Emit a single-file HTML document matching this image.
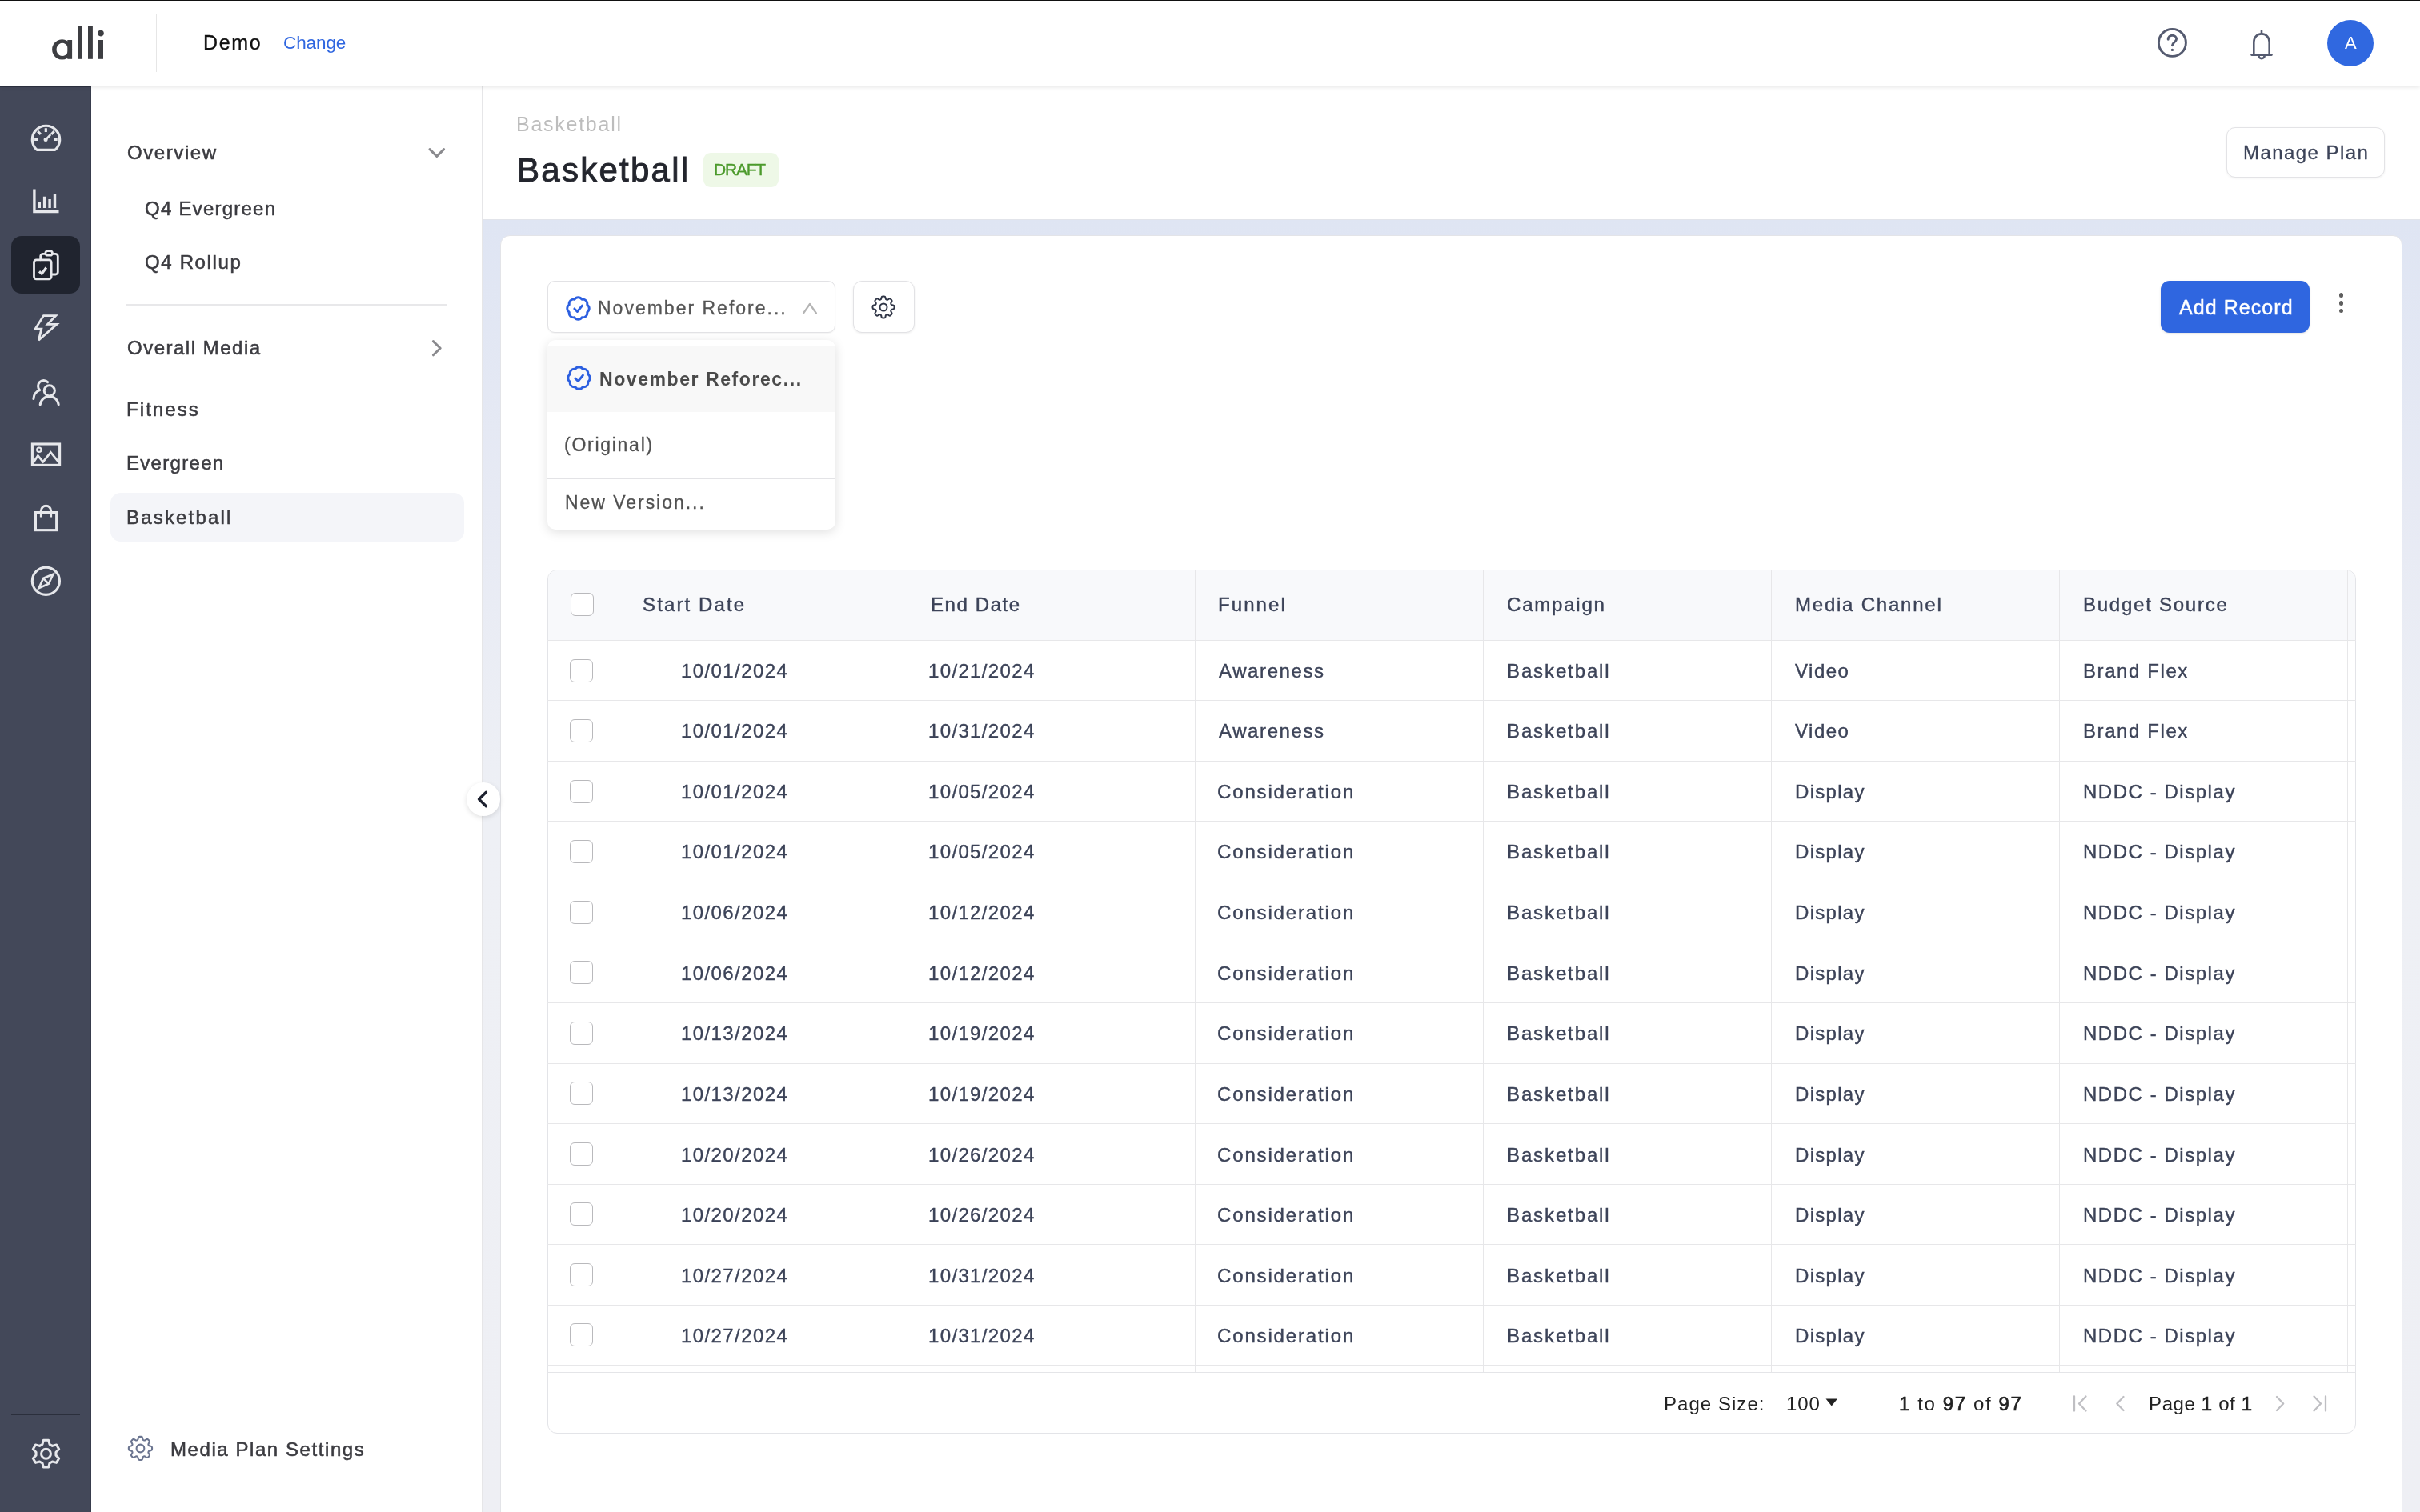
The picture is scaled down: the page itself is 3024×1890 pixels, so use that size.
<!DOCTYPE html>
<html><head><meta charset="utf-8"><title>Basketball - Media Plan</title><style>
*{margin:0;padding:0;box-sizing:border-box}
html,body{width:3024px;height:1890px;overflow:hidden;background:#fff;font-family:"Liberation Sans", sans-serif}
.a{position:absolute}
.t{position:absolute;line-height:1;white-space:nowrap;will-change:transform}
svg{position:absolute;overflow:visible}

b{font-weight:400;-webkit-text-stroke:0.65px #222}
</style></head><body>
<div class="a" style="left:602px;top:274px;width:2422px;height:1616px;background:linear-gradient(to bottom,#dfe5f3 0px,#e7eaf4 350px,#eef0f5 750px,#eeeff4 1616px)"></div><div class="a" style="left:602px;top:274px;width:2422px;height:1px;background:#e2e4ea"></div><div class="a" style="left:624.8px;top:293.5px;width:2377.2px;height:1700px;background:#fff;border-radius:12px;border:1px solid #e3e4e8"></div><div class="a" style="left:0;top:0;width:3024px;height:108px;background:#fff;box-shadow:0 1px 5px rgba(0,0,0,0.10);z-index:5"></div><div class="a" style="left:0;top:0;width:3024px;height:1px;background:#111;z-index:6"></div><svg style="left:0;top:0;z-index:6" width="200" height="108" viewBox="0 0 200 108">
<g fill="#3d3e42">
<path fill-rule="evenodd" d="M77.6 49.2a12.5 12.7 0 1 0 0.01 0Z M77.9 53.8a7.3 8.1 0 1 1 -0.01 0Z"/>
<rect x="84.3" y="50" width="5.8" height="23.8"/>
<rect x="97" y="32.3" width="6" height="41.5"/>
<rect x="110" y="32.3" width="5.9" height="41.5"/>
<rect x="122.9" y="50" width="6.1" height="23.8"/>
<circle cx="126" cy="41.6" r="3.8"/>
</g></svg><div class="a" style="left:195px;top:18px;width:1px;height:72px;background:#e6e6e6;z-index:6"></div><div style="position:absolute;z-index:6;left:0;top:0"><div class="t" style="left:253.88px;top:40.84px;font-size:25px;color:#111;font-weight:400;letter-spacing:1.64px;-webkit-text-stroke:0.35px #111;">Demo</div><div class="t" style="left:353.88px;top:42.95px;font-size:22.5px;color:#2f66e0;font-weight:400;letter-spacing:-0.09599999999999997px;">Change</div></div><svg style="left:2690px;top:30px;z-index:6" width="50" height="50" viewBox="0 0 50 50">
<g fill="none" stroke="#555b70" stroke-width="2.9" stroke-linecap="round">
<circle cx="24.4" cy="23.4" r="17"/>
<path d="M19.2 19.3c0-3.2 2.3-5 5.2-5 2.9 0 5.2 1.8 5.2 4.5 0 3.9-5.2 4.1-5.2 8"/>
</g><circle cx="24.4" cy="32.4" r="1.7" fill="#555b70"/></svg><svg style="left:2800px;top:30px;z-index:6" width="50" height="50" viewBox="0 0 50 50">
<g fill="none" stroke="#555b70" stroke-width="2.6" stroke-linejoin="round" stroke-linecap="round">
<path d="M16.3 38.5V22.6c0-6 4.3-10.2 9.7-10.2s9.7 4.2 9.7 10.2v15.9"/>
<path d="M13.5 38.6h25"/>
<path d="M22.3 39.4a3.7 3.7 0 0 0 7.4 0"/>
<path d="M26 8.5v3"/>
</g></svg><div class="a" style="left:2908.3px;top:25px;width:58px;height:58px;border-radius:50%;background:#3068e0;z-index:6"></div><div style="position:absolute;z-index:7;left:0;top:0"><div class="t" style="left:2929.9px;top:43.38px;font-size:22px;color:#fff;font-weight:400;letter-spacing:0px;">A</div></div><div class="a" style="left:0;top:108px;width:114px;height:1782px;background:#434859;border-right:1px solid #383d4d;border-top:1px solid #2e3242;z-index:4"></div><div class="a" style="left:14px;top:295px;width:86px;height:71.5px;background:#20242f;border-radius:13px;z-index:4"></div><div class="a" style="left:14px;top:1766.5px;width:86px;height:2px;background:#2b2f3c;z-index:4"></div><svg style="left:0;top:0;z-index:5" width="114" height="1890" viewBox="0 0 114 1890">
<g fill="none" stroke="#e6e7eb" stroke-width="3" stroke-linecap="butt" stroke-linejoin="round">
<!-- gauge -->
<path d="M46.2 187.4 A17.2 17.2 0 1 1 68.8 187.4 Z" stroke-width="3.2"/>
<path d="M57.3 160.3v4.7 M47.2 164.2l3.6 3.6 M67.8 164.2l-3.6 3.6 M43.1 174.5h4.4 M67.3 174.5h4.4" stroke-width="3.2"/>
<path d="M57.1 174.6 L62.6 169" stroke-width="2.6" stroke-linecap="round"/>
</g>
<circle cx="57.1" cy="174.6" r="2.5" fill="#e6e7eb"/>
<g fill="none" stroke="#e6e7eb" stroke-width="3.4" stroke-linecap="butt" stroke-linejoin="miter">
<!-- bar chart -->
<path d="M42.9 236.6V264.6H73.5"/>
<path d="M49.3 259.9v-6.8 M55.6 259.9v-14.2 M62.1 259.9v-10.9 M68.5 259.9v-17.9" stroke-width="3.4" stroke-linecap="butt"/>
</g>
<g fill="none" stroke="#e6e7eb" stroke-width="2.8" stroke-linecap="round" stroke-linejoin="round">
<!-- clipboard -->
<path d="M50.7 324.8V320.3a3 3 0 0 1 3-3H69.3a3 3 0 0 1 3 3V340a3 3 0 0 1-3 3H64.1"/>
<rect x="56.8" y="313.7" width="8.7" height="5.5" rx="2.75" fill="#20242f"/>
<rect x="42.5" y="324.8" width="21.6" height="24" rx="3"/>
<path d="M49 339.3l3.2 2.8 5.6-7.6" stroke-width="3.2" stroke-linecap="butt" stroke-linejoin="miter"/>
<!-- lightning -->
<path d="M54.5 394.6H69.7L59.5 405.3H71L48.3 425.3L51.8 411.1H44.1Z" stroke-linejoin="miter" stroke-miterlimit="3" stroke-linecap="butt"/>
<!-- people -->
<path d="M59.6 477.6A6.4 6.4 0 1 0 49.6 487.6 M49.6 487.6A12.2 12.2 0 0 0 41.9 498.6" stroke-width="3"/>
<circle cx="61.8" cy="488.3" r="6.6" stroke-width="3"/>
<path d="M50.2 505.7A11.6 11.6 0 0 1 73.2 505.7" stroke-width="3"/>
<!-- image -->
<rect x="40.4" y="555" width="34.2" height="26.4" stroke-width="3.1" stroke-linejoin="miter"/>
<circle cx="48.9" cy="562.2" r="2.7" stroke-width="2.2"/>
<path d="M41.8 578.1L47.4 569.6L53.8 577.4L63.4 565.3L73.7 578.1" stroke-width="2.7" stroke-linejoin="miter" stroke-linecap="butt"/>
<!-- bag -->
<rect x="44.45" y="640.55" width="26.2" height="22.1" stroke-width="3.1" stroke-linejoin="miter"/>
<path d="M51.4 646.5V638.3A6.1 6.1 0 0 1 63.6 638.3V646.5" stroke-width="3" stroke-linecap="butt"/>
<!-- compass -->
<circle cx="57.4" cy="726.3" r="17.1" stroke-width="3.1"/>
<path d="M66.4 717.7L60.8 729.8L48.5 735.1L54.2 722.8Z M54.5 723.3L60.5 729.3" stroke-width="2.6" stroke-linejoin="miter"/>
</g>
<g fill="none" stroke="#e6e7eb" stroke-width="3">
<path d="M52.98 1805.44 L54.37 1800.29 L60.63 1800.29 L62.02 1805.44 L65.43 1807.41 L70.58 1806.03 L73.71 1811.46 L69.94 1815.23 L69.94 1819.17 L73.71 1822.94 L70.58 1828.37 L65.43 1826.99 L62.02 1828.96 L60.63 1834.11 L54.37 1834.11 L52.98 1828.96 L49.57 1826.99 L44.42 1828.37 L41.29 1822.94 L45.06 1819.17 L45.06 1815.23 L41.29 1811.46 L44.42 1806.03 L49.57 1807.41Z" stroke-linejoin="round"/>
<circle cx="57.5" cy="1817.2" r="6"/>
</g>
</svg><div class="a" style="left:114px;top:108px;width:489px;height:1782px;background:#fff;border-right:1px solid #e6e6e8;z-index:3"></div><div class="a" style="left:137.5px;top:616.4px;width:442.5px;height:60.4px;background:#f4f5f9;border-radius:13px;z-index:3"></div><div style="position:absolute;z-index:4;left:0;top:0"><div class="t" style="left:159.36px;top:179.18px;font-size:24px;color:#3b3b40;font-weight:400;letter-spacing:1.5739999999999998px;-webkit-text-stroke:0.55px #3b3b40;">Overview</div><div class="t" style="left:181.0px;top:249.08px;font-size:24px;color:#3b3b40;font-weight:400;letter-spacing:1.24px;-webkit-text-stroke:0.55px #3b3b40;">Q4 Evergreen</div><div class="t" style="left:181.0px;top:316.28px;font-size:24px;color:#3b3b40;font-weight:400;letter-spacing:1.6509999999999998px;-webkit-text-stroke:0.55px #3b3b40;">Q4 Rollup</div><div class="t" style="left:159.0px;top:422.68px;font-size:24px;color:#3b3b40;font-weight:400;letter-spacing:1.5px;-webkit-text-stroke:0.55px #3b3b40;">Overall Media</div><div class="t" style="left:158.46px;top:500.08px;font-size:24px;color:#3b3b40;font-weight:400;letter-spacing:2.07px;-webkit-text-stroke:0.55px #3b3b40;">Fitness</div><div class="t" style="left:158.46px;top:567.28px;font-size:24px;color:#3b3b40;font-weight:400;letter-spacing:1.307px;-webkit-text-stroke:0.55px #3b3b40;">Evergreen</div><div class="t" style="left:158.46px;top:635.08px;font-size:24px;color:#3b3b40;font-weight:400;letter-spacing:2.18px;-webkit-text-stroke:0.55px #3b3b40;">Basketball</div><div class="t" style="left:213.1px;top:1799.88px;font-size:24px;color:#3b3b40;font-weight:400;letter-spacing:1.57px;-webkit-text-stroke:0.55px #3b3b40;">Media Plan Settings</div></div><div class="a" style="left:158px;top:380px;width:401px;height:1.5px;background:#e8e8ea;z-index:4"></div><div class="a" style="left:130px;top:1751.7px;width:458px;height:1.5px;background:#e8e8ea;z-index:4"></div><svg style="left:0;top:0;z-index:4" width="600" height="1890" viewBox="0 0 600 1890">
<g fill="none" stroke="#8a8a8e" stroke-width="3" stroke-linecap="round" stroke-linejoin="round">
<path d="M537 186.6l8.8 8.8 8.8-8.8"/>
<path d="M541.4 426.6l8.8 8.6-8.8 8.6"/>
</g>
</svg><svg style="left:156.43px;top:1791.33px;z-index:4" width="38.93" height="38.93" viewBox="0 0 24 24"><g fill="none" stroke="#6b7590" stroke-width="1.295" stroke-linecap="round" stroke-linejoin="round"><path d="M10.343 3.94c.09-.542.56-.94 1.11-.94h1.093c.55 0 1.02.398 1.11.94l.149.894c.07.424.384.764.78.93.398.164.855.142 1.205-.108l.737-.527a1.125 1.125 0 0 1 1.45.12l.773.774c.39.389.44 1.002.12 1.45l-.527.737c-.25.35-.272.806-.107 1.204.165.397.505.71.93.78l.893.15c.543.09.94.559.94 1.109v1.094c0 .55-.397 1.02-.94 1.11l-.894.149c-.424.07-.764.383-.929.78-.165.398-.143.854.107 1.204l.527.738c.32.447.269 1.06-.12 1.45l-.774.773a1.125 1.125 0 0 1-1.449.12l-.738-.527c-.35-.25-.806-.272-1.203-.107-.398.165-.71.505-.781.929l-.149.894c-.09.542-.56.94-1.11.94h-1.094c-.55 0-1.019-.398-1.11-.94l-.148-.894c-.071-.424-.384-.764-.781-.93-.398-.164-.854-.142-1.204.108l-.738.527c-.447.32-1.06.269-1.45-.12l-.773-.774a1.125 1.125 0 0 1-.12-1.45l.527-.737c.25-.35.272-.806.108-1.204-.165-.397-.506-.71-.93-.78l-.894-.15c-.542-.09-.94-.56-.94-1.109v-1.094c0-.55.398-1.02.94-1.11l.894-.149c.424-.07.765-.383.93-.78.165-.398.143-.854-.108-1.204l-.526-.738a1.125 1.125 0 0 1 .12-1.45l.773-.773a1.125 1.125 0 0 1 1.45-.12l.737.527c.35.25.807.272 1.204.107.397-.165.71-.505.78-.929l.15-.894Z"/><circle cx="12" cy="12" r="3"/></g></svg><div class="a" style="left:582.6px;top:978px;width:42px;height:42px;border-radius:50%;background:#fff;box-shadow:0 2px 6px rgba(0,0,0,0.12);z-index:8"></div><svg style="left:590px;top:985px;z-index:9" width="28" height="28" viewBox="0 0 28 28"><path d="M17.4 5.3L8.5 14l8.9 8.7" fill="none" stroke="#1e2230" stroke-width="3.4" stroke-linecap="round" stroke-linejoin="round"/></svg><div class="a" style="left:603px;top:108px;width:2421px;height:166px;background:#fff;z-index:2"></div><div class="a" style="left:879px;top:191px;width:94px;height:43px;background:#eef8e7;border-radius:9px;z-index:2"></div><div class="a" style="left:2782px;top:159px;width:197.5px;height:62.5px;border:1.5px solid #e3e3e6;border-radius:11px;background:#fff;box-shadow:0 1px 3px rgba(0,0,0,0.06);z-index:2"></div><div style="position:absolute;z-index:3;left:0;top:0"><div class="t" style="left:644.74px;top:142.84px;font-size:25px;color:#bdbdbd;font-weight:400;letter-spacing:1.74px;">Basketball</div><div class="t" style="left:645.76px;top:191.85px;font-size:42px;color:#23252d;font-weight:400;letter-spacing:2.26px;-webkit-text-stroke:0.9px #23252d;">Basketball</div><div class="t" style="left:892.32px;top:201.02px;font-size:21px;color:#4c9a2c;font-weight:400;letter-spacing:-1.224px;-webkit-text-stroke:0.35px #4c9a2c;">DRAFT</div><div class="t" style="left:2803.28px;top:178.68px;font-size:24px;color:#3c4358;font-weight:400;letter-spacing:1.438px;-webkit-text-stroke:0.3px #3c4358;">Manage Plan</div></div><div class="a" style="left:683.5px;top:351px;width:360px;height:64.6px;border:1.5px solid #e2e2e5;border-radius:9px;background:#fff;box-shadow:0 1px 2px rgba(0,0,0,0.05);z-index:10"></div><svg style="left:705.5px;top:368.5px;z-index:12" width="33" height="33" viewBox="0 0 24 24">
<g fill="none" stroke="#2c5fe0" stroke-width="2.109" stroke-linecap="round" stroke-linejoin="round">
<path d="M3.85 8.62a4 4 0 0 1 4.78-4.77 4 4 0 0 1 6.74 0 4 4 0 0 1 4.78 4.78 4 4 0 0 1 0 6.74 4 4 0 0 1-4.77 4.78 4 4 0 0 1-6.75 0 4 4 0 0 1-4.78-4.77 4 4 0 0 1 0-6.76Z"/>
<path d="m8.6 12.3 2.6 2.6 4.4-5.4"/></g></svg><div style="position:absolute;z-index:11;left:0;top:0"><div class="t" style="left:747.42px;top:374.03px;font-size:23px;color:#555;font-weight:400;letter-spacing:2.0px;-webkit-text-stroke:0.3px #555;">November Refore...</div></div><svg style="left:1000px;top:375.3px;z-index:11" width="24" height="22" viewBox="0 0 24 22"><path d="M4.1 16.4l7.9-11.4 7.9 11.4" fill="none" stroke="#b4b4b4" stroke-width="2.3" stroke-linecap="round" stroke-linejoin="round"/></svg><div class="a" style="left:1066px;top:351px;width:77px;height:64.6px;border:1.5px solid #e2e2e5;border-radius:11px;background:#fff;box-shadow:0 1px 3px rgba(0,0,0,0.07);z-index:10"></div><svg style="left:1085.80px;top:365.80px;z-index:11" width="36.00" height="36.00" viewBox="0 0 24 24"><g fill="none" stroke="#2f3546" stroke-width="1.333" stroke-linecap="round" stroke-linejoin="round"><path d="M10.343 3.94c.09-.542.56-.94 1.11-.94h1.093c.55 0 1.02.398 1.11.94l.149.894c.07.424.384.764.78.93.398.164.855.142 1.205-.108l.737-.527a1.125 1.125 0 0 1 1.45.12l.773.774c.39.389.44 1.002.12 1.45l-.527.737c-.25.35-.272.806-.107 1.204.165.397.505.71.93.78l.893.15c.543.09.94.559.94 1.109v1.094c0 .55-.397 1.02-.94 1.11l-.894.149c-.424.07-.764.383-.929.78-.165.398-.143.854.107 1.204l.527.738c.32.447.269 1.06-.12 1.45l-.774.773a1.125 1.125 0 0 1-1.449.12l-.738-.527c-.35-.25-.806-.272-1.203-.107-.398.165-.71.505-.781.929l-.149.894c-.09.542-.56.94-1.11.94h-1.094c-.55 0-1.019-.398-1.11-.94l-.148-.894c-.071-.424-.384-.764-.781-.93-.398-.164-.854-.142-1.204.108l-.738.527c-.447.32-1.06.269-1.45-.12l-.773-.774a1.125 1.125 0 0 1-.12-1.45l.527-.737c.25-.35.272-.806.108-1.204-.165-.397-.506-.71-.93-.78l-.894-.15c-.542-.09-.94-.56-.94-1.109v-1.094c0-.55.398-1.02.94-1.11l.894-.149c.424-.07.765-.383.93-.78.165-.398.143-.854-.108-1.204l-.526-.738a1.125 1.125 0 0 1 .12-1.45l.773-.773a1.125 1.125 0 0 1 1.45-.12l.737.527c.35.25.807.272 1.204.107.397-.165.71-.505.78-.929l.15-.894Z"/><circle cx="12" cy="12" r="3"/></g></svg><div class="a" style="left:2700px;top:351px;width:186px;height:65px;background:#2f66e0;border-radius:11px;box-shadow:0 1px 3px rgba(0,0,0,0.12);z-index:10"></div><div style="position:absolute;z-index:11;left:0;top:0"><div class="t" style="left:2722.82px;top:371.84px;font-size:25px;color:#fff;font-weight:400;letter-spacing:1.06px;-webkit-text-stroke:0.45px #fff;">Add Record</div></div><div class="a" style="left:2922.7px;top:365.90000000000003px;width:5.8px;height:5.8px;border-radius:50%;background:#5f5f5f;z-index:10"></div><div class="a" style="left:2922.7px;top:375.8px;width:5.8px;height:5.8px;border-radius:50%;background:#5f5f5f;z-index:10"></div><div class="a" style="left:2922.7px;top:385.70000000000005px;width:5.8px;height:5.8px;border-radius:50%;background:#5f5f5f;z-index:10"></div><div class="a" style="left:684px;top:425px;width:360px;height:237px;background:#fff;border-radius:10px;box-shadow:0 3px 14px rgba(0,0,0,0.13);z-index:20;overflow:hidden"><div class="a" style="left:0;top:6.7px;width:360px;height:83px;background:#f8f8f8"></div><div class="a" style="left:0;top:172.5px;width:360px;height:1.5px;background:#e3e3e6"></div></div><svg style="left:707.3px;top:456.4px;z-index:22" width="33" height="33" viewBox="0 0 24 24">
<g fill="none" stroke="#2c5fe0" stroke-width="2.109" stroke-linecap="round" stroke-linejoin="round">
<path d="M3.85 8.62a4 4 0 0 1 4.78-4.77 4 4 0 0 1 6.74 0 4 4 0 0 1 4.78 4.78 4 4 0 0 1 0 6.74 4 4 0 0 1-4.77 4.78 4 4 0 0 1-6.75 0 4 4 0 0 1-4.78-4.77 4 4 0 0 1 0-6.76Z"/>
<path d="m8.6 12.3 2.6 2.6 4.4-5.4"/></g></svg><div style="position:absolute;z-index:22;left:0;top:0"><div class="t" style="left:749.0px;top:462.53px;font-size:23px;color:#4a4a4a;font-weight:700;letter-spacing:1.575px;-webkit-text-stroke:0.1px #4a4a4a;">November Reforec...</div><div class="t" style="left:705.46px;top:545.03px;font-size:23px;color:#505050;font-weight:400;letter-spacing:1.73px;-webkit-text-stroke:0.3px #505050;">(Original)</div><div class="t" style="left:705.64px;top:617.03px;font-size:23px;color:#505050;font-weight:400;letter-spacing:1.961px;-webkit-text-stroke:0.3px #505050;">New Version...</div></div><div class="a" style="left:683.5px;top:712px;width:2260.0px;height:1079.5px;border:1.5px solid #e3e4e8;border-radius:12px;background:#fff;overflow:hidden;z-index:5"><div class="a" style="left:0;top:0;width:100%;height:88.29999999999995px;background:#f8f9fb"></div></div><div style="position:absolute;z-index:6;left:0;top:0"><div class="a" style="left:683.5px;top:799.6px;width:2260.0px;height:1.5px;background:#e7e7e9"></div><div class="a" style="left:683.5px;top:875px;width:2260.0px;height:1px;background:#e7e7e9"></div><div class="a" style="left:683.5px;top:951px;width:2260.0px;height:1px;background:#e7e7e9"></div><div class="a" style="left:683.5px;top:1026px;width:2260.0px;height:1px;background:#e7e7e9"></div><div class="a" style="left:683.5px;top:1102px;width:2260.0px;height:1px;background:#e7e7e9"></div><div class="a" style="left:683.5px;top:1177px;width:2260.0px;height:1px;background:#e7e7e9"></div><div class="a" style="left:683.5px;top:1253px;width:2260.0px;height:1px;background:#e7e7e9"></div><div class="a" style="left:683.5px;top:1329px;width:2260.0px;height:1px;background:#e7e7e9"></div><div class="a" style="left:683.5px;top:1404px;width:2260.0px;height:1px;background:#e7e7e9"></div><div class="a" style="left:683.5px;top:1480px;width:2260.0px;height:1px;background:#e7e7e9"></div><div class="a" style="left:683.5px;top:1555px;width:2260.0px;height:1px;background:#e7e7e9"></div><div class="a" style="left:683.5px;top:1631px;width:2260.0px;height:1px;background:#e7e7e9"></div><div class="a" style="left:683.5px;top:1706px;width:2260.0px;height:1px;background:#e7e7e9"></div><div class="a" style="left:683.5px;top:1714.6px;width:2260.0px;height:1px;background:#e4e5e8"></div><div class="a" style="left:773.10px;top:713px;width:1px;height:1002px;background:#e7e7e9"></div><div class="a" style="left:1133.10px;top:713px;width:1px;height:1002px;background:#e7e7e9"></div><div class="a" style="left:1493.10px;top:713px;width:1px;height:1002px;background:#e7e7e9"></div><div class="a" style="left:1853.10px;top:713px;width:1px;height:1002px;background:#e7e7e9"></div><div class="a" style="left:2213.10px;top:713px;width:1px;height:1002px;background:#e7e7e9"></div><div class="a" style="left:2573.10px;top:713px;width:1px;height:1002px;background:#e7e7e9"></div><div class="a" style="left:2932.80px;top:713px;width:1px;height:1002px;background:#e7e7e9"></div><div class="a" style="left:712.8px;top:740.8px;width:29px;height:29px;border:1.5px solid #b9b9bc;border-radius:6px;background:#fff"></div><div class="a" style="left:712px;top:823.5649999999999px;width:29px;height:29px;border:1.5px solid #b9b9bc;border-radius:6px;background:#fff"></div><div class="a" style="left:712px;top:899.0949999999999px;width:29px;height:29px;border:1.5px solid #b9b9bc;border-radius:6px;background:#fff"></div><div class="a" style="left:712px;top:974.6249999999999px;width:29px;height:29px;border:1.5px solid #b9b9bc;border-radius:6px;background:#fff"></div><div class="a" style="left:712px;top:1050.155px;width:29px;height:29px;border:1.5px solid #b9b9bc;border-radius:6px;background:#fff"></div><div class="a" style="left:712px;top:1125.6850000000002px;width:29px;height:29px;border:1.5px solid #b9b9bc;border-radius:6px;background:#fff"></div><div class="a" style="left:712px;top:1201.215px;width:29px;height:29px;border:1.5px solid #b9b9bc;border-radius:6px;background:#fff"></div><div class="a" style="left:712px;top:1276.7450000000001px;width:29px;height:29px;border:1.5px solid #b9b9bc;border-radius:6px;background:#fff"></div><div class="a" style="left:712px;top:1352.275px;width:29px;height:29px;border:1.5px solid #b9b9bc;border-radius:6px;background:#fff"></div><div class="a" style="left:712px;top:1427.805px;width:29px;height:29px;border:1.5px solid #b9b9bc;border-radius:6px;background:#fff"></div><div class="a" style="left:712px;top:1503.335px;width:29px;height:29px;border:1.5px solid #b9b9bc;border-radius:6px;background:#fff"></div><div class="a" style="left:712px;top:1578.865px;width:29px;height:29px;border:1.5px solid #b9b9bc;border-radius:6px;background:#fff"></div><div class="a" style="left:712px;top:1654.3950000000002px;width:29px;height:29px;border:1.5px solid #b9b9bc;border-radius:6px;background:#fff"></div><div class="t" style="left:802.9200000000001px;top:743.58px;font-size:24px;color:#3c4358;font-weight:400;letter-spacing:2.12px;-webkit-text-stroke:0.45px #3c4358;">Start Date</div><div class="t" style="left:1163.36px;top:743.58px;font-size:24px;color:#3c4358;font-weight:400;letter-spacing:1.592px;-webkit-text-stroke:0.45px #3c4358;">End Date</div><div class="t" style="left:1522.4199999999998px;top:743.58px;font-size:24px;color:#3c4358;font-weight:400;letter-spacing:2.076px;-webkit-text-stroke:0.45px #3c4358;">Funnel</div><div class="t" style="left:1882.74px;top:743.58px;font-size:24px;color:#3c4358;font-weight:400;letter-spacing:1.7930000000000001px;-webkit-text-stroke:0.45px #3c4358;">Campaign</div><div class="t" style="left:2242.8px;top:743.58px;font-size:24px;color:#3c4358;font-weight:400;letter-spacing:1.774px;-webkit-text-stroke:0.45px #3c4358;">Media Channel</div><div class="t" style="left:2603.3199999999997px;top:743.58px;font-size:24px;color:#3c4358;font-weight:400;letter-spacing:1.748px;-webkit-text-stroke:0.45px #3c4358;">Budget Source</div><div class="t" style="left:851.36px;top:826.55px;font-size:24px;color:#3c4358;font-weight:400;letter-spacing:1.4100000000000001px;-webkit-text-stroke:0.4px #3c4358;">10/01/2024</div><div class="t" style="left:1160.46px;top:826.55px;font-size:24px;color:#3c4358;font-weight:400;letter-spacing:1.35px;-webkit-text-stroke:0.4px #3c4358;">10/21/2024</div><div class="t" style="left:1523.12px;top:826.55px;font-size:24px;color:#3c4358;font-weight:400;letter-spacing:1.596px;-webkit-text-stroke:0.4px #3c4358;">Awareness</div><div class="t" style="left:1882.86px;top:826.55px;font-size:24px;color:#3c4358;font-weight:400;letter-spacing:1.88px;-webkit-text-stroke:0.4px #3c4358;">Basketball</div><div class="t" style="left:2242.9px;top:826.55px;font-size:24px;color:#3c4358;font-weight:400;letter-spacing:1.505px;-webkit-text-stroke:0.4px #3c4358;">Video</div><div class="t" style="left:2602.52px;top:826.55px;font-size:24px;color:#3c4358;font-weight:400;letter-spacing:1.5899999999999999px;-webkit-text-stroke:0.4px #3c4358;">Brand Flex</div><div class="t" style="left:851.36px;top:902.18px;font-size:24px;color:#3c4358;font-weight:400;letter-spacing:1.4100000000000001px;-webkit-text-stroke:0.4px #3c4358;">10/01/2024</div><div class="t" style="left:1160.46px;top:902.18px;font-size:24px;color:#3c4358;font-weight:400;letter-spacing:1.35px;-webkit-text-stroke:0.4px #3c4358;">10/31/2024</div><div class="t" style="left:1523.12px;top:902.18px;font-size:24px;color:#3c4358;font-weight:400;letter-spacing:1.596px;-webkit-text-stroke:0.4px #3c4358;">Awareness</div><div class="t" style="left:1882.86px;top:902.18px;font-size:24px;color:#3c4358;font-weight:400;letter-spacing:1.88px;-webkit-text-stroke:0.4px #3c4358;">Basketball</div><div class="t" style="left:2242.9px;top:902.18px;font-size:24px;color:#3c4358;font-weight:400;letter-spacing:1.505px;-webkit-text-stroke:0.4px #3c4358;">Video</div><div class="t" style="left:2602.52px;top:902.18px;font-size:24px;color:#3c4358;font-weight:400;letter-spacing:1.5899999999999999px;-webkit-text-stroke:0.4px #3c4358;">Brand Flex</div><div class="t" style="left:851.36px;top:977.81px;font-size:24px;color:#3c4358;font-weight:400;letter-spacing:1.4100000000000001px;-webkit-text-stroke:0.4px #3c4358;">10/01/2024</div><div class="t" style="left:1160.46px;top:977.81px;font-size:24px;color:#3c4358;font-weight:400;letter-spacing:1.35px;-webkit-text-stroke:0.4px #3c4358;">10/05/2024</div><div class="t" style="left:1521.32px;top:977.81px;font-size:24px;color:#3c4358;font-weight:400;letter-spacing:1.8479999999999999px;-webkit-text-stroke:0.4px #3c4358;">Consideration</div><div class="t" style="left:1882.86px;top:977.81px;font-size:24px;color:#3c4358;font-weight:400;letter-spacing:1.88px;-webkit-text-stroke:0.4px #3c4358;">Basketball</div><div class="t" style="left:2242.9px;top:977.81px;font-size:24px;color:#3c4358;font-weight:400;letter-spacing:1.3010000000000002px;-webkit-text-stroke:0.4px #3c4358;">Display</div><div class="t" style="left:2602.52px;top:977.81px;font-size:24px;color:#3c4358;font-weight:400;letter-spacing:1.541px;-webkit-text-stroke:0.4px #3c4358;">NDDC - Display</div><div class="t" style="left:851.36px;top:1053.44px;font-size:24px;color:#3c4358;font-weight:400;letter-spacing:1.4100000000000001px;-webkit-text-stroke:0.4px #3c4358;">10/01/2024</div><div class="t" style="left:1160.46px;top:1053.44px;font-size:24px;color:#3c4358;font-weight:400;letter-spacing:1.35px;-webkit-text-stroke:0.4px #3c4358;">10/05/2024</div><div class="t" style="left:1521.32px;top:1053.44px;font-size:24px;color:#3c4358;font-weight:400;letter-spacing:1.8479999999999999px;-webkit-text-stroke:0.4px #3c4358;">Consideration</div><div class="t" style="left:1882.86px;top:1053.44px;font-size:24px;color:#3c4358;font-weight:400;letter-spacing:1.88px;-webkit-text-stroke:0.4px #3c4358;">Basketball</div><div class="t" style="left:2242.9px;top:1053.44px;font-size:24px;color:#3c4358;font-weight:400;letter-spacing:1.3010000000000002px;-webkit-text-stroke:0.4px #3c4358;">Display</div><div class="t" style="left:2602.52px;top:1053.44px;font-size:24px;color:#3c4358;font-weight:400;letter-spacing:1.541px;-webkit-text-stroke:0.4px #3c4358;">NDDC - Display</div><div class="t" style="left:851.36px;top:1129.07px;font-size:24px;color:#3c4358;font-weight:400;letter-spacing:1.4100000000000001px;-webkit-text-stroke:0.4px #3c4358;">10/06/2024</div><div class="t" style="left:1160.46px;top:1129.07px;font-size:24px;color:#3c4358;font-weight:400;letter-spacing:1.35px;-webkit-text-stroke:0.4px #3c4358;">10/12/2024</div><div class="t" style="left:1521.32px;top:1129.07px;font-size:24px;color:#3c4358;font-weight:400;letter-spacing:1.8479999999999999px;-webkit-text-stroke:0.4px #3c4358;">Consideration</div><div class="t" style="left:1882.86px;top:1129.07px;font-size:24px;color:#3c4358;font-weight:400;letter-spacing:1.88px;-webkit-text-stroke:0.4px #3c4358;">Basketball</div><div class="t" style="left:2242.9px;top:1129.07px;font-size:24px;color:#3c4358;font-weight:400;letter-spacing:1.3010000000000002px;-webkit-text-stroke:0.4px #3c4358;">Display</div><div class="t" style="left:2602.52px;top:1129.07px;font-size:24px;color:#3c4358;font-weight:400;letter-spacing:1.541px;-webkit-text-stroke:0.4px #3c4358;">NDDC - Display</div><div class="t" style="left:851.36px;top:1204.70px;font-size:24px;color:#3c4358;font-weight:400;letter-spacing:1.4100000000000001px;-webkit-text-stroke:0.4px #3c4358;">10/06/2024</div><div class="t" style="left:1160.46px;top:1204.70px;font-size:24px;color:#3c4358;font-weight:400;letter-spacing:1.35px;-webkit-text-stroke:0.4px #3c4358;">10/12/2024</div><div class="t" style="left:1521.32px;top:1204.70px;font-size:24px;color:#3c4358;font-weight:400;letter-spacing:1.8479999999999999px;-webkit-text-stroke:0.4px #3c4358;">Consideration</div><div class="t" style="left:1882.86px;top:1204.70px;font-size:24px;color:#3c4358;font-weight:400;letter-spacing:1.88px;-webkit-text-stroke:0.4px #3c4358;">Basketball</div><div class="t" style="left:2242.9px;top:1204.70px;font-size:24px;color:#3c4358;font-weight:400;letter-spacing:1.3010000000000002px;-webkit-text-stroke:0.4px #3c4358;">Display</div><div class="t" style="left:2602.52px;top:1204.70px;font-size:24px;color:#3c4358;font-weight:400;letter-spacing:1.541px;-webkit-text-stroke:0.4px #3c4358;">NDDC - Display</div><div class="t" style="left:851.36px;top:1280.33px;font-size:24px;color:#3c4358;font-weight:400;letter-spacing:1.4100000000000001px;-webkit-text-stroke:0.4px #3c4358;">10/13/2024</div><div class="t" style="left:1160.46px;top:1280.33px;font-size:24px;color:#3c4358;font-weight:400;letter-spacing:1.35px;-webkit-text-stroke:0.4px #3c4358;">10/19/2024</div><div class="t" style="left:1521.32px;top:1280.33px;font-size:24px;color:#3c4358;font-weight:400;letter-spacing:1.8479999999999999px;-webkit-text-stroke:0.4px #3c4358;">Consideration</div><div class="t" style="left:1882.86px;top:1280.33px;font-size:24px;color:#3c4358;font-weight:400;letter-spacing:1.88px;-webkit-text-stroke:0.4px #3c4358;">Basketball</div><div class="t" style="left:2242.9px;top:1280.33px;font-size:24px;color:#3c4358;font-weight:400;letter-spacing:1.3010000000000002px;-webkit-text-stroke:0.4px #3c4358;">Display</div><div class="t" style="left:2602.52px;top:1280.33px;font-size:24px;color:#3c4358;font-weight:400;letter-spacing:1.541px;-webkit-text-stroke:0.4px #3c4358;">NDDC - Display</div><div class="t" style="left:851.36px;top:1355.96px;font-size:24px;color:#3c4358;font-weight:400;letter-spacing:1.4100000000000001px;-webkit-text-stroke:0.4px #3c4358;">10/13/2024</div><div class="t" style="left:1160.46px;top:1355.96px;font-size:24px;color:#3c4358;font-weight:400;letter-spacing:1.35px;-webkit-text-stroke:0.4px #3c4358;">10/19/2024</div><div class="t" style="left:1521.32px;top:1355.96px;font-size:24px;color:#3c4358;font-weight:400;letter-spacing:1.8479999999999999px;-webkit-text-stroke:0.4px #3c4358;">Consideration</div><div class="t" style="left:1882.86px;top:1355.96px;font-size:24px;color:#3c4358;font-weight:400;letter-spacing:1.88px;-webkit-text-stroke:0.4px #3c4358;">Basketball</div><div class="t" style="left:2242.9px;top:1355.96px;font-size:24px;color:#3c4358;font-weight:400;letter-spacing:1.3010000000000002px;-webkit-text-stroke:0.4px #3c4358;">Display</div><div class="t" style="left:2602.52px;top:1355.96px;font-size:24px;color:#3c4358;font-weight:400;letter-spacing:1.541px;-webkit-text-stroke:0.4px #3c4358;">NDDC - Display</div><div class="t" style="left:851.36px;top:1431.59px;font-size:24px;color:#3c4358;font-weight:400;letter-spacing:1.4100000000000001px;-webkit-text-stroke:0.4px #3c4358;">10/20/2024</div><div class="t" style="left:1160.46px;top:1431.59px;font-size:24px;color:#3c4358;font-weight:400;letter-spacing:1.35px;-webkit-text-stroke:0.4px #3c4358;">10/26/2024</div><div class="t" style="left:1521.32px;top:1431.59px;font-size:24px;color:#3c4358;font-weight:400;letter-spacing:1.8479999999999999px;-webkit-text-stroke:0.4px #3c4358;">Consideration</div><div class="t" style="left:1882.86px;top:1431.59px;font-size:24px;color:#3c4358;font-weight:400;letter-spacing:1.88px;-webkit-text-stroke:0.4px #3c4358;">Basketball</div><div class="t" style="left:2242.9px;top:1431.59px;font-size:24px;color:#3c4358;font-weight:400;letter-spacing:1.3010000000000002px;-webkit-text-stroke:0.4px #3c4358;">Display</div><div class="t" style="left:2602.52px;top:1431.59px;font-size:24px;color:#3c4358;font-weight:400;letter-spacing:1.541px;-webkit-text-stroke:0.4px #3c4358;">NDDC - Display</div><div class="t" style="left:851.36px;top:1507.22px;font-size:24px;color:#3c4358;font-weight:400;letter-spacing:1.4100000000000001px;-webkit-text-stroke:0.4px #3c4358;">10/20/2024</div><div class="t" style="left:1160.46px;top:1507.22px;font-size:24px;color:#3c4358;font-weight:400;letter-spacing:1.35px;-webkit-text-stroke:0.4px #3c4358;">10/26/2024</div><div class="t" style="left:1521.32px;top:1507.22px;font-size:24px;color:#3c4358;font-weight:400;letter-spacing:1.8479999999999999px;-webkit-text-stroke:0.4px #3c4358;">Consideration</div><div class="t" style="left:1882.86px;top:1507.22px;font-size:24px;color:#3c4358;font-weight:400;letter-spacing:1.88px;-webkit-text-stroke:0.4px #3c4358;">Basketball</div><div class="t" style="left:2242.9px;top:1507.22px;font-size:24px;color:#3c4358;font-weight:400;letter-spacing:1.3010000000000002px;-webkit-text-stroke:0.4px #3c4358;">Display</div><div class="t" style="left:2602.52px;top:1507.22px;font-size:24px;color:#3c4358;font-weight:400;letter-spacing:1.541px;-webkit-text-stroke:0.4px #3c4358;">NDDC - Display</div><div class="t" style="left:851.36px;top:1582.85px;font-size:24px;color:#3c4358;font-weight:400;letter-spacing:1.4100000000000001px;-webkit-text-stroke:0.4px #3c4358;">10/27/2024</div><div class="t" style="left:1160.46px;top:1582.85px;font-size:24px;color:#3c4358;font-weight:400;letter-spacing:1.35px;-webkit-text-stroke:0.4px #3c4358;">10/31/2024</div><div class="t" style="left:1521.32px;top:1582.85px;font-size:24px;color:#3c4358;font-weight:400;letter-spacing:1.8479999999999999px;-webkit-text-stroke:0.4px #3c4358;">Consideration</div><div class="t" style="left:1882.86px;top:1582.85px;font-size:24px;color:#3c4358;font-weight:400;letter-spacing:1.88px;-webkit-text-stroke:0.4px #3c4358;">Basketball</div><div class="t" style="left:2242.9px;top:1582.85px;font-size:24px;color:#3c4358;font-weight:400;letter-spacing:1.3010000000000002px;-webkit-text-stroke:0.4px #3c4358;">Display</div><div class="t" style="left:2602.52px;top:1582.85px;font-size:24px;color:#3c4358;font-weight:400;letter-spacing:1.541px;-webkit-text-stroke:0.4px #3c4358;">NDDC - Display</div><div class="t" style="left:851.36px;top:1658.48px;font-size:24px;color:#3c4358;font-weight:400;letter-spacing:1.4100000000000001px;-webkit-text-stroke:0.4px #3c4358;">10/27/2024</div><div class="t" style="left:1160.46px;top:1658.48px;font-size:24px;color:#3c4358;font-weight:400;letter-spacing:1.35px;-webkit-text-stroke:0.4px #3c4358;">10/31/2024</div><div class="t" style="left:1521.32px;top:1658.48px;font-size:24px;color:#3c4358;font-weight:400;letter-spacing:1.8479999999999999px;-webkit-text-stroke:0.4px #3c4358;">Consideration</div><div class="t" style="left:1882.86px;top:1658.48px;font-size:24px;color:#3c4358;font-weight:400;letter-spacing:1.88px;-webkit-text-stroke:0.4px #3c4358;">Basketball</div><div class="t" style="left:2242.9px;top:1658.48px;font-size:24px;color:#3c4358;font-weight:400;letter-spacing:1.3010000000000002px;-webkit-text-stroke:0.4px #3c4358;">Display</div><div class="t" style="left:2602.52px;top:1658.48px;font-size:24px;color:#3c4358;font-weight:400;letter-spacing:1.541px;-webkit-text-stroke:0.4px #3c4358;">NDDC - Display</div><div class="t" style="left:2079.2px;top:1742.68px;font-size:24px;color:#222;font-weight:400;letter-spacing:1.04px;">Page Size:</div><div class="t" style="left:2231.98px;top:1742.68px;font-size:24px;color:#222;font-weight:400;letter-spacing:0.87px;">100</div><svg style="left:2280px;top:1747px" width="18" height="12" viewBox="0 0 18 12"><path d="M1.5 1.5h14.5l-7.25 9z" fill="#222"/></svg><div class="t" style="left:2372.96px;top:1742.68px;font-size:24px;color:#222;font-weight:400;letter-spacing:1.62px;"><b>1</b> to <b>97</b> of <b>97</b></div><div class="t" style="left:2684.56px;top:1742.68px;font-size:24px;color:#222;font-weight:400;letter-spacing:0.626px;">Page <b>1</b> of <b>1</b></div><svg style="left:2585px;top:1740px" width="330" height="30" viewBox="0 0 330 30"><g fill="none" stroke="#bfbfc3" stroke-width="2.3" stroke-linecap="round" stroke-linejoin="round">
<path d="M7 5.5v18 M21.5 5.5l-8.5 9 8.5 9"/>
<path d="M68.5 6l-8.2 8.5 8.2 8.5"/>
<path d="M260 6l8.2 8.5-8.2 8.5"/>
<path d="M306.5 5.5l8.5 9-8.5 9 M321 5.5v18"/>
</g></svg></div>
<script>(function(){var w=window.innerWidth;if(w&&Math.abs(w-3024)>4){document.documentElement.style.zoom=(w/3024);}})();</script>
</body></html>
